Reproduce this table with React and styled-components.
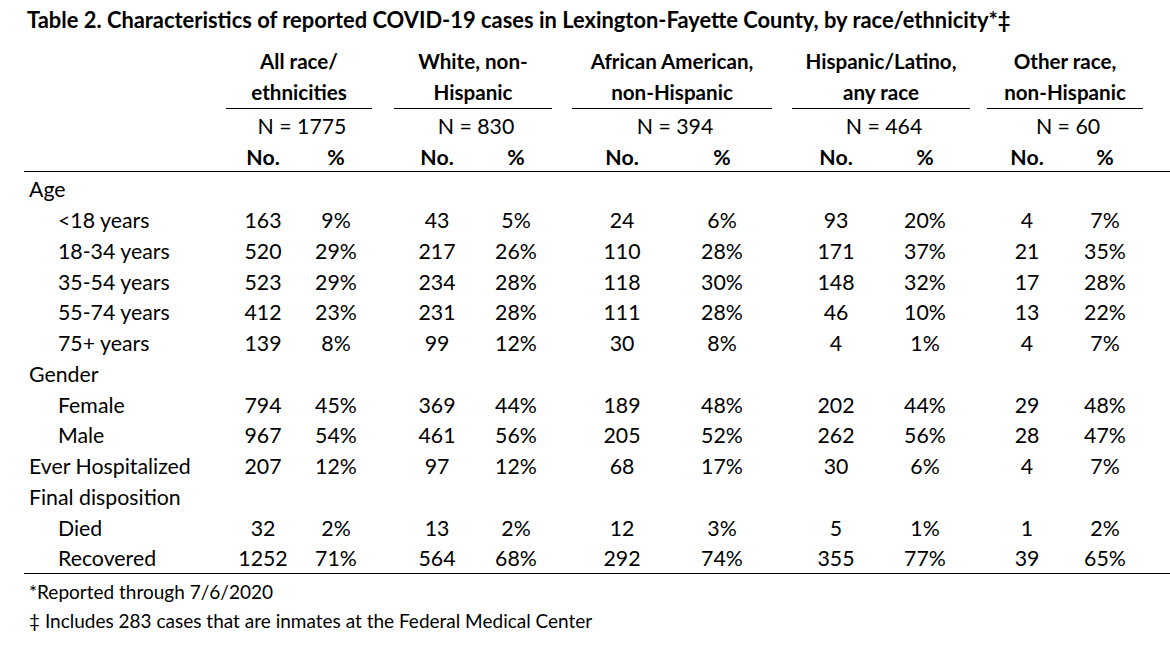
import React from 'react';
import styled, { createGlobalStyle } from 'styled-components';

const GlobalStyle = createGlobalStyle`
  html, body {
    margin: 0;
    padding: 0;
    background: #fff;
  }
  body {
    font-family: Lato, "Open Sans", "Liberation Sans", sans-serif;
    color: #000;
  }
`;

const Page = styled.div`
  width: 1170px;
  height: 661px;
  padding-left: 24px;
  box-sizing: border-box;
  font-size: 21.3px;
`;

const Title = styled.div`
  font-size: 21.9px;
  font-weight: 700;
  line-height: 22px;
  padding: 9px 0 0 3px;
  white-space: nowrap;
`;

const Row = styled.div`
  display: flex;
  align-items: center;
  height: ${p => p.$h || 30.75}px;
  padding-top: ${p => p.$pt || 0}px;
  font-weight: ${p => (p.$bold ? 700 : 400)};
  border-bottom: ${p => (p.$rule ? '1.5px solid #000' : 'none')};
  box-sizing: border-box;
`;

const Label = styled.div`
  width: 202px;
  flex: none;
  box-sizing: border-box;
  padding-left: ${p => (p.$indent ? 34 : 5)}px;
  white-space: nowrap;
`;

const Group = styled.div`
  display: grid;
  grid-template-columns: ${p => p.$no}px ${p => p.$pct}px;
  margin-left: ${p => p.$ml}px;
  flex: none;
  text-align: center;
`;

const GroupHead = styled.div`
  width: ${p => p.$w}px;
  margin-left: ${p => p.$ml}px;
  flex: none;
  text-align: center;
  font-size: 20.6px;
  font-weight: 700;
  line-height: 31px;
  border-bottom: 1px solid #000;
  white-space: nowrap;
`;

const GroupN = styled.div`
  width: ${p => p.$w}px;
  margin-left: ${p => p.$ml}px;
  flex: none;
  text-align: center;
  padding-left: 6px;
  box-sizing: border-box;
`;

const Cell = styled.div`
  white-space: nowrap;
`;

const Body = styled.div`
  padding-top: 1px;
  border-bottom: 1.5px solid #000;
  width: 1146px;
`;

const HeadBlock = styled.div`
  display: flex;
  align-items: flex-end;
  margin-top: 15px;
`;

const Spacer = styled.div`
  width: 202px;
  flex: none;
`;

const Notes = styled.div`
  font-size: 19px;
  padding: 3px 0 0 5px;
`;

const Note = styled.div`
  line-height: 29px;
`;

const groups = [
  { name: ['All race/', 'ethnicities'], n: 1775, no: 74, pct: 72, ml: 0 },
  { name: ['White, non-', 'Hispanic'], n: 830, no: 86, pct: 72, ml: 22 },
  { name: ['African American,', 'non-Hispanic'], n: 394, no: 100, pct: 100, ml: 20 },
  { name: ['Hispanic/Latino,', 'any race'], n: 464, no: 88, pct: 90, ml: 20 },
  { name: ['Other race,', 'non-Hispanic'], n: 60, no: 80, pct: 76, ml: 17 },
];

const rows = [
  { label: 'Age' },
  { label: '<18 years', sub: true, v: [163, '9%', 43, '5%', 24, '6%', 93, '20%', 4, '7%'] },
  { label: '18-34 years', sub: true, v: [520, '29%', 217, '26%', 110, '28%', 171, '37%', 21, '35%'] },
  { label: '35-54 years', sub: true, v: [523, '29%', 234, '28%', 118, '30%', 148, '32%', 17, '28%'] },
  { label: '55-74 years', sub: true, v: [412, '23%', 231, '28%', 111, '28%', 46, '10%', 13, '22%'] },
  { label: '75+ years', sub: true, v: [139, '8%', 99, '12%', 30, '8%', 4, '1%', 4, '7%'] },
  { label: 'Gender' },
  { label: 'Female', sub: true, v: [794, '45%', 369, '44%', 189, '48%', 202, '44%', 29, '48%'] },
  { label: 'Male', sub: true, v: [967, '54%', 461, '56%', 205, '52%', 262, '56%', 28, '47%'] },
  { label: 'Ever Hospitalized', v: [207, '12%', 97, '12%', 68, '17%', 30, '6%', 4, '7%'] },
  { label: 'Final disposition' },
  { label: 'Died', sub: true, v: [32, '2%', 13, '2%', 12, '3%', 5, '1%', 1, '2%'] },
  { label: 'Recovered', sub: true, v: [1252, '71%', 564, '68%', 292, '74%', 355, '77%', 39, '65%'] },
];

function DataRow({ label, sub, v }) {
  return (
    <Row $pt={2}>
      <Label $indent={sub}>{label}</Label>
      {v &&
        groups.map((g, i) => (
          <Group key={i} $no={g.no} $pct={g.pct} $ml={g.ml}>
            <Cell>{v[i * 2]}</Cell>
            <Cell>{v[i * 2 + 1]}</Cell>
          </Group>
        ))}
    </Row>
  );
}

export default function App() {
  return (
    <Page>
      <GlobalStyle />
      <Title>Table 2. Characteristics of reported COVID-19 cases in Lexington-Fayette County, by race/ethnicity*‡</Title>

      <HeadBlock>
        <Spacer />
        {groups.map((g, i) => (
          <GroupHead key={i} $w={g.no + g.pct} $ml={g.ml}>
            {g.name[0]}
            <br />
            {g.name[1]}
          </GroupHead>
        ))}
      </HeadBlock>

      <Row $h={33}>
        <Spacer />
        {groups.map((g, i) => (
          <GroupN key={i} $w={g.no + g.pct} $ml={g.ml}>N = {g.n}</GroupN>
        ))}
      </Row>

      <Row $bold $rule $h={30} style={{ width: 1146 }}>
        <Spacer />
        {groups.map((g, i) => (
          <Group key={i} $no={g.no} $pct={g.pct} $ml={g.ml}>
            <Cell>No.</Cell>
            <Cell>%</Cell>
          </Group>
        ))}
      </Row>

      <Body>
        {rows.map((r, i) => (
          <DataRow key={i} {...r} />
        ))}
      </Body>

      <Notes>
        <Note>*Reported through 7/6/2020</Note>
        <Note>‡ Includes 283 cases that are inmates at the Federal Medical Center</Note>
      </Notes>
    </Page>
  );
}
